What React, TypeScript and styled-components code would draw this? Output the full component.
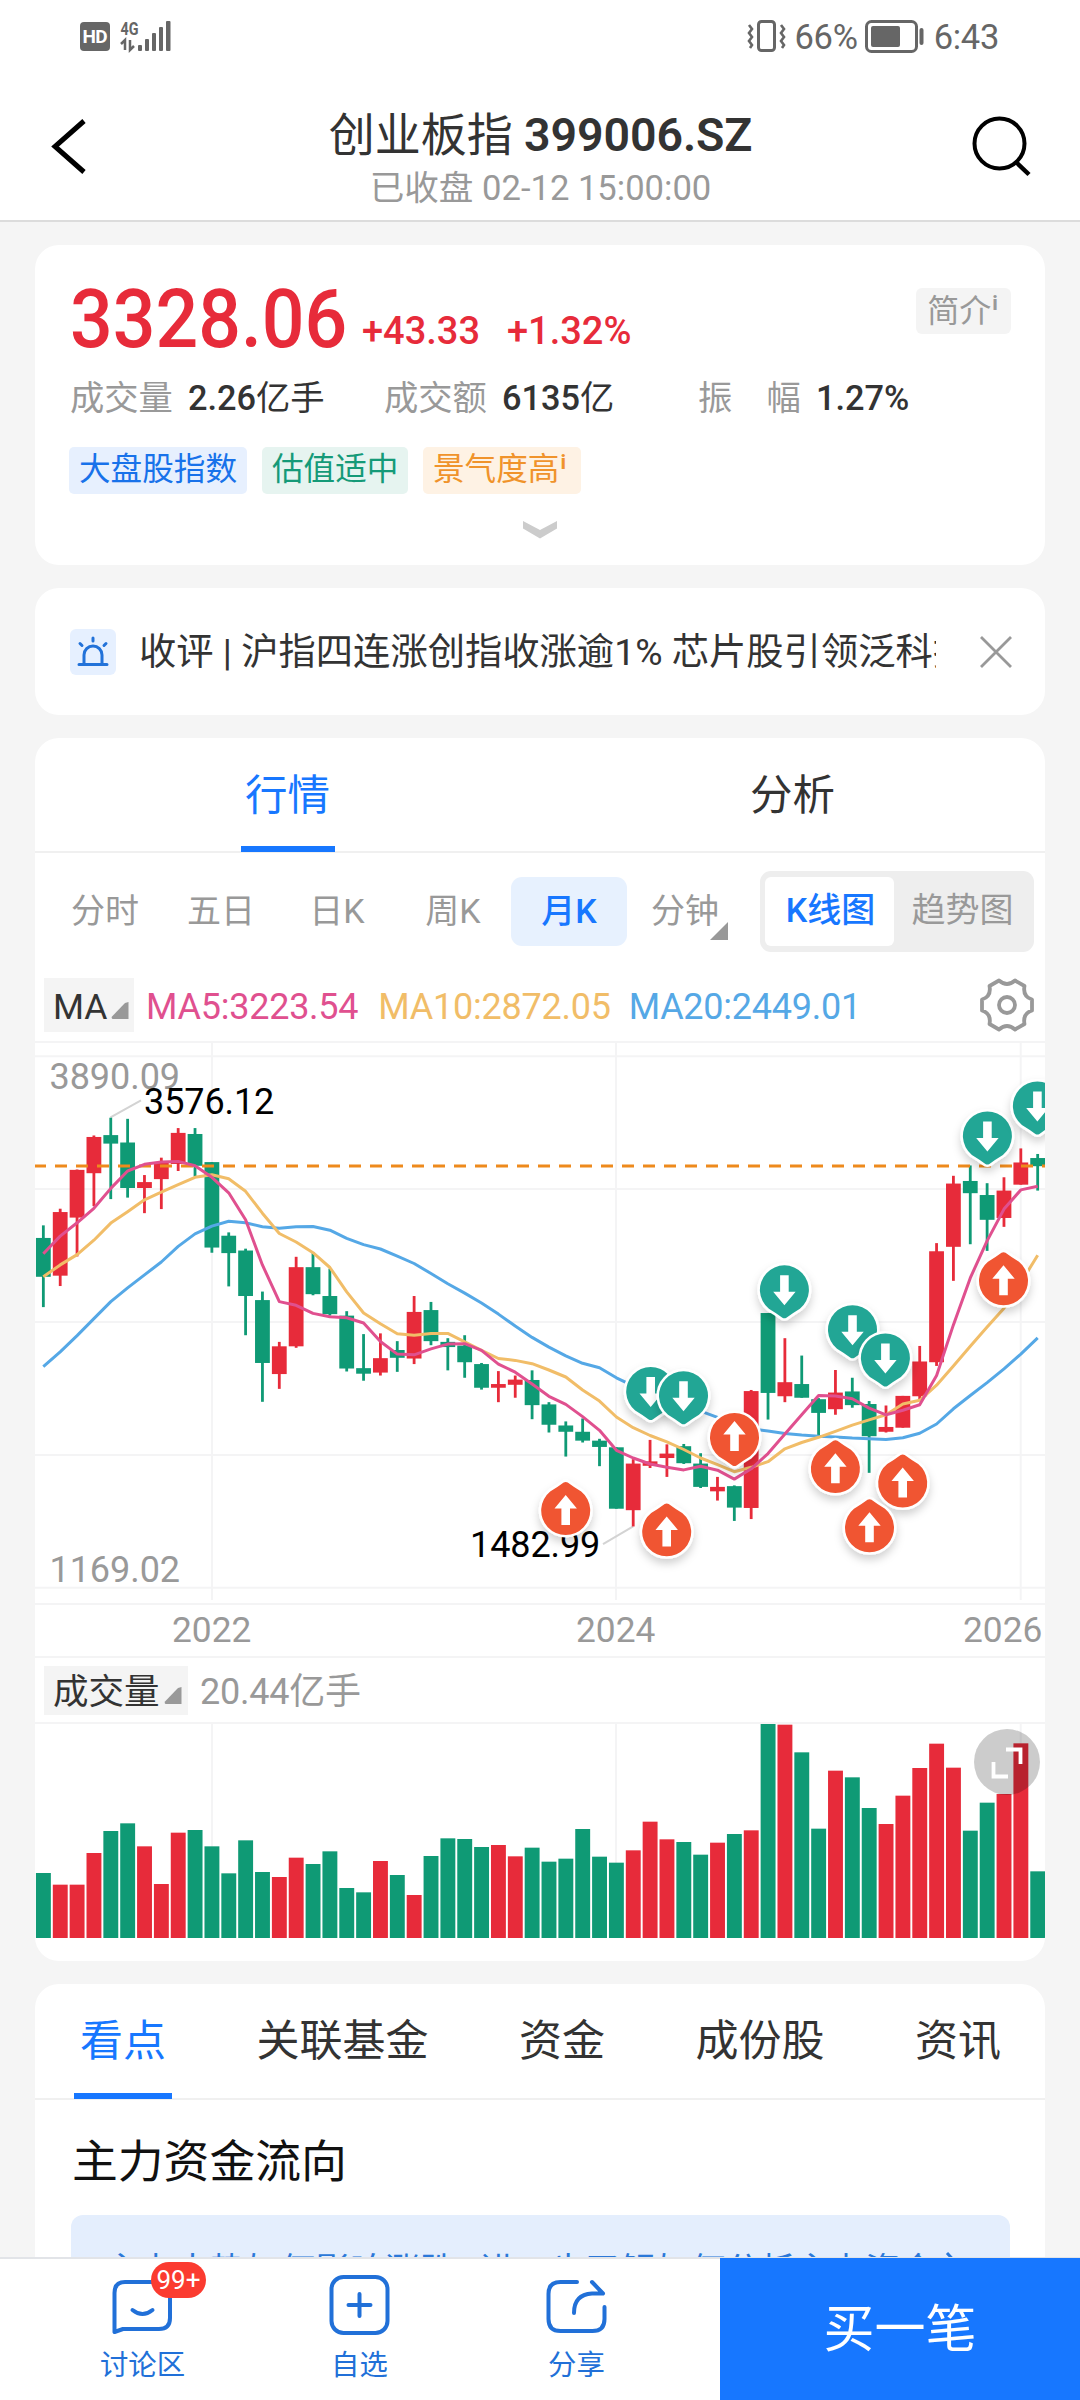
import React from "react";
import styled, { createGlobalStyle } from "styled-components";

const BLUE = "#1777ff";
const RED = "#e72b3a";
const GREEN = "#0f9a75";
const GREY = "#999999";
const LINE = "#f4f4f5";

const GlobalStyle = createGlobalStyle`
  html, body { margin: 0; padding: 0; background: #f5f5f5; }
  * { box-sizing: border-box; }
  body { font-family: Roboto, "Noto Sans CJK SC", sans-serif; color: #333; }
`;

const Screen = styled.div`
  width: 1080px;
  height: 2400px;
  display: flex;
  flex-direction: column;
  overflow: hidden;
  background: #f5f5f5;
`;

const Top = styled.header`
  flex: none;
  height: 222px;
  background: #fff;
  border-bottom: 2px solid #dcdcdc;
`;

const StatusBar = styled.div`
  height: 72px;
  padding: 0 81px 0 80px;
  display: flex;
  align-items: center;
  justify-content: space-between;
  color: #666;
`;

const StatusGroup = styled.div`
  display: flex;
  align-items: center;
`;

const StatusText = styled.span<{ $ml: number }>`
  margin-left: ${(p) => p.$ml}px;
  padding-top: 2px;
  font-size: 34.5px;
  line-height: 40px;
  letter-spacing: -0.3px;
`;

const NavBar = styled.div`
  height: 148px;
  padding: 0 48px 0 50px;
  display: flex;
  justify-content: space-between;
`;

const NavIcon = styled.svg`
  margin-top: 44px;
  flex: none;
`;

const TitleBlock = styled.div`
  display: flex;
  flex-direction: column;
  align-items: center;
  padding: 33px 0 0 21px;
`;

const Title = styled.h1`
  margin: 0;
  font-size: 46px;
  line-height: 60px;
  font-weight: 400;
  color: #333;
  white-space: nowrap;
  b { font-weight: 600; font-size: 46.5px; letter-spacing: -0.1px; }
`;

const Subtitle = styled.div`
  margin-top: 2px;
  font-size: 34.6px;
  line-height: 42px;
  color: ${GREY};
  white-space: nowrap;
`;

const Body = styled.main`
  flex: 1;
  min-height: 0;
  overflow: hidden;
  padding: 23px 35px 0;
  display: flex;
  flex-direction: column;
  gap: 23px;
`;

const Card = styled.section<{ $h: number }>`
  flex: none;
  height: ${(p) => p.$h}px;
  background: #fff;
  border-radius: 24px;
  overflow: hidden;
`;

const QuoteCard = styled(Card)`
  padding: 33px 35px 0;
`;

const PriceRow = styled.div`
  height: 84px;
  display: flex;
  align-items: flex-start;
  justify-content: space-between;
`;

const Prices = styled.div`
  display: flex;
  align-items: baseline;
  color: ${RED};
  line-height: 82px;
  font-weight: 500;
`;

const BigPrice = styled.span`
  width: 292px;
  font-size: 82px;
  transform: scaleX(0.917);
  transform-origin: 0 0;
`;

const Delta = styled.span<{ $w: number }>`
  width: ${(p) => p.$w}px;
  margin-bottom: -8px;
  align-self: flex-end;
  line-height: 74px;
  font-size: 38px;
`;

const IntroButton = styled.button`
  margin: 10px -1px 0 0;
  width: 95px;
  height: 46px;
  border: 0;
  border-radius: 6px;
  background: #f4f4f4;
  color: ${GREY};
  font: 400 32px/46px Roboto, "Noto Sans CJK SC", sans-serif;
  padding: 0 2px 0 0;
  display: flex;
  justify-content: center;
`;

const Sup = styled.span`
  font-size: 21px;
  line-height: 31px;
  font-weight: 700;
  margin-left: 1px;
`;

const StatRow = styled.div`
  margin-top: 12px;
  height: 48px;
  display: flex;
  align-items: center;
`;

const Stat = styled.div<{ $w: number }>`
  width: ${(p) => p.$w}px;
  display: flex;
  align-items: baseline;
  gap: 15px;
  font-size: 34.3px;
  line-height: 48px;
  white-space: pre;
`;

const StatLabel = styled.span`
  color: ${GREY};
`;

const StatValue = styled.span`
  color: #333;
  b { font-weight: 500; }
`;

const Tags = styled.div`
  margin: 25px 0 0 -1px;
  display: flex;
  gap: 15px;
`;

const Tag = styled.span<{ $c: string; $bg: string; $w: number }>`
  width: ${(p) => p.$w}px;
  height: 47px;
  padding-left: 10px;
  border-radius: 5px;
  display: flex;
  font-size: 31.6px;
  line-height: 45px;
  color: ${(p) => p.$c};
  background: ${(p) => p.$bg};
`;

const MoreIcon = styled.svg`
  display: block;
  margin: 26px auto 0;
`;

const NewsCard = styled(Card)`
  padding: 0 33px 0 35px;
  display: flex;
  align-items: center;
`;

const NewsIcon = styled.span`
  width: 46px;
  height: 46px;
  flex: none;
  border-radius: 6px;
  background: #e6f0ff;
`;

const NewsText = styled.div`
  margin-left: 23px;
  width: 797px;
  overflow: hidden;
  white-space: nowrap;
  font-size: 37.3px;
  line-height: 54px;
  color: #333;
`;

const CloseIcon = styled.svg`
  margin-left: auto;
  flex: none;
`;

const MainTabs = styled.div`
  height: 115px;
  display: flex;
  border-bottom: 2px solid #f0f0f0;
`;

const MainTab = styled.div<{ $on?: boolean }>`
  flex: 1;
  display: flex;
  flex-direction: column;
  align-items: center;
  font-size: 42.5px;
  line-height: 115px;
  color: ${(p) => (p.$on ? BLUE : "#333")};
  &::after {
    content: "";
    flex: none;
    margin-top: -7px;
    width: 94px;
    height: 6px;
    background: ${(p) => (p.$on ? BLUE : "transparent")};
  }
`;

const Periods = styled.div`
  height: 116px;
  padding: 0 11px 0 12px;
  display: flex;
  align-items: center;
`;

const Period = styled.div<{ $on?: boolean }>`
  position: relative;
  width: 116px;
  height: 69px;
  border-radius: 11px;
  text-align: center;
  font-size: 34px;
  line-height: 68px;
  color: ${(p) => (p.$on ? BLUE : GREY)};
  font-weight: ${(p) => (p.$on ? 500 : 400)};
  background: ${(p) => (p.$on ? "#e7f1fe" : "transparent")};
`;

const Corner = styled.svg`
  position: absolute;
  right: 15px;
  bottom: 6px;
`;

const Segment = styled.div`
  margin-left: auto;
  width: 274px;
  height: 81px;
  border-radius: 11px;
  background: #eeeeee;
  padding: 6px 5px;
  display: flex;
`;

const SegmentItem = styled.div<{ $on?: boolean; $w: number }>`
  width: ${(p) => p.$w}px;
  height: 69px;
  padding-left: 2px;
  border-radius: 6px;
  text-align: center;
  font-size: 34px;
  line-height: 67px;
  color: ${(p) => (p.$on ? BLUE : GREY)};
  background: ${(p) => (p.$on ? "#fff" : "transparent")};
  font-weight: ${(p) => (p.$on ? 500 : 400)};
`;

const IndicatorRow = styled.div<{ $h: number }>`
  height: ${(p) => p.$h}px;
  padding: 0 11px 0 9px;
  display: flex;
  align-items: center;
  border-bottom: 2px solid ${LINE};
`;

const Selector = styled.div<{ $w: number; $h: number; $pad: number }>`
  width: ${(p) => p.$w}px;
  height: ${(p) => p.$h}px;
  padding: 3px 0 0 ${(p) => p.$pad}px;
  background: #f4f4f4;
  display: flex;
  align-items: center;
  gap: 4px;
  font-size: 35.5px;
  color: #333;
  line-height: 48px;
  svg { margin-top: 8px; }
`;

const Indicator = styled.span<{ $c: string; $ml: number }>`
  margin-left: ${(p) => p.$ml}px;
  padding-top: 3px;
  font-size: 36px;
  line-height: 48px;
  letter-spacing: -0.25px;
  color: ${(p) => p.$c};
`;

const GearIcon = styled.svg`
  margin-left: auto;
`;

const Chart = styled.svg`
  display: block;
  text { font-family: Roboto, "Noto Sans CJK SC", sans-serif; font-size: 36px; }
`;

const Years = styled.div`
  height: 55px;
  border-top: 2px solid ${LINE};
  border-bottom: 2px solid ${LINE};
  display: flex;
  font-size: 35.3px;
  line-height: 51px;
  color: ${GREY};
`;

const Year = styled.span<{ $ml: number }>`
  width: 80px;
  margin-left: ${(p) => p.$ml}px;
`;

const VolumeArea = styled.div`
  position: relative;
`;

const ExpandButton = styled.svg`
  position: absolute;
  right: 5px;
  top: 5px;
`;

const InfoTabs = styled.div`
  height: 116px;
  padding: 0 44px 0 39px;
  display: flex;
  justify-content: space-between;
  border-bottom: 2px solid #f0f0f0;
`;

const InfoTab = styled.div<{ $on?: boolean }>`
  padding: 0 ${(p) => (p.$on ? "6px" : "0")};
  margin-right: ${(p) => (p.$on ? "-6px" : "0")};
  font-size: 43px;
  line-height: 115px;
  color: ${(p) => (p.$on ? BLUE : "#333")};
  height: 115px;
  border-bottom: 6px solid ${(p) => (p.$on ? BLUE : "transparent")};
`;

const SectionTitle = styled.h2`
  margin: 30px 0 0 37px;
  font-size: 45.8px;
  line-height: 66px;
  font-weight: 400;
  color: #111;
`;

const Tip = styled.div`
  margin: 19px 35px 0 36px;
  height: 110px;
  border-radius: 12px;
  background: #e4eefd;
  padding: 33px 34px 0;
  display: flex;
  font-size: 35px;
  line-height: 48px;
  color: #2b78d8;
  white-space: nowrap;
`;

const BottomBar = styled.footer`
  flex: none;
  height: 143px;
  background: #fff;
  display: flex;
  border-top: 2px solid #e2e4e8;
`;

const ActionBar = styled.div`
  width: 720px;
  display: flex;
  padding-left: 34px;
`;

const Action = styled.div`
  position: relative;
  width: 217px;
  padding: 15px 0 0 78px;
  color: #2170d8;
`;

const ActionLabel = styled.div`
  margin: 0 0 0 -78px;
  text-align: center;
  font-size: 28.4px;
  line-height: 40px;
  padding-top: 6px;
`;

const Badge = styled.span`
  position: absolute;
  left: 117px;
  top: 3px;
  width: 55px;
  height: 36px;
  border-radius: 18px;
  background: #fb3b30;
  color: #fff;
  font-size: 26px;
  line-height: 37px;
  text-align: center;
`;

const BuyButton = styled.div`
  width: 360px;
  margin-top: -1px;
  background: ${BLUE};
  color: #fff;
  font-size: 51px;
  line-height: 143px;
  text-align: center;
`;

/* high, body top, body bottom, low, rising; measured in plot units */
const CANDLES: [number, number, number, number, number][] = [
  [528, 562, 667, 749, 0], [483, 492, 664, 692, 1], [377, 378, 507, 612, 1], [285, 289, 387, 476, 1],
  [237, 284, 307, 457, 0], [240, 304, 427, 453, 0], [392, 411, 427, 495, 1], [345, 358, 403, 484, 1],
  [265, 278, 362, 381, 1], [265, 281, 367, 396, 0], [357, 357, 588, 602, 0], [547, 556, 603, 693, 0],
  [591, 596, 719, 825, 0], [707, 730, 900, 1005, 0], [843, 855, 930, 970, 1], [613, 641, 855, 859, 1],
  [600, 641, 714, 717, 0], [645, 719, 768, 772, 0], [760, 772, 915, 923, 0], [822, 914, 929, 948, 0],
  [820, 887, 926, 934, 1], [841, 865, 886, 924, 0], [719, 762, 888, 903, 1], [735, 757, 841, 852, 0],
  [833, 843, 857, 920, 0], [825, 853, 898, 940, 0], [900, 903, 967, 972, 0], [922, 957, 967, 1006, 1],
  [934, 945, 959, 994, 1], [920, 946, 1014, 1052, 0], [1006, 1012, 1067, 1088, 0], [1058, 1069, 1086, 1153, 0],
  [1050, 1086, 1110, 1115, 0], [1105, 1110, 1127, 1179, 0], [1128, 1128, 1294, 1294, 0], [1160, 1172, 1298, 1342, 1],
  [1108, 1166, 1178, 1184, 1], [1120, 1145, 1157, 1208, 1], [1119, 1125, 1171, 1173, 0], [1144, 1172, 1235, 1238, 0],
  [1208, 1235, 1247, 1272, 1], [1231, 1233, 1291, 1327, 0], [973, 976, 1292, 1322, 1], [765, 765, 981, 1053, 0],
  [833, 952, 990, 1006, 1], [880, 957, 994, 994, 0], [995, 998, 1035, 1100, 0], [919, 980, 1025, 1040, 1],
  [940, 977, 1014, 1021, 0], [1003, 1011, 1098, 1197, 0], [1015, 1073, 1086, 1088, 1], [989, 989, 1075, 1075, 1],
  [854, 896, 990, 1000, 1], [576, 598, 898, 908, 1], [394, 415, 586, 678, 1], [366, 408, 441, 579, 0],
  [414, 446, 513, 597, 0], [398, 434, 508, 532, 1], [320, 358, 418, 418, 1], [335, 346, 368, 434, 0],
];

const MA5 = [605, 557, 521, 482, 428, 381, 363, 357, 355, 367, 398, 440, 513, 635, 734, 744, 766, 775, 778, 792, 842, 876, 878, 862, 849, 848, 866, 903, 925, 957, 990, 1012, 1045, 1082, 1136, 1157, 1173, 1182, 1189, 1179, 1190, 1214, 1186, 1145, 1092, 1040, 988, 989, 997, 1022, 1040, 1028, 1013, 934, 797, 670, 570, 484, 432, 422];
const MA10 = [667, 635, 607, 568, 522, 491, 459, 438, 418, 398, 391, 402, 436, 495, 550, 573, 602, 642, 708, 765, 794, 821, 825, 820, 820, 843, 866, 888, 893, 902, 919, 938, 973, 1003, 1046, 1075, 1096, 1113, 1134, 1157, 1175, 1194, 1182, 1167, 1132, 1115, 1101, 1085, 1068, 1054, 1040, 1011, 1001, 960, 908, 855, 803, 752, 683, 609];
const MA20 = [910, 870, 826, 780, 734, 697, 662, 627, 585, 551, 530, 517, 521, 532, 536, 532, 531, 541, 563, 580, 592, 611, 631, 658, 686, 711, 738, 768, 800, 831, 857, 881, 901, 913, 940, 962, 985, 1005, 1020, 1030, 1047, 1068, 1078, 1084, 1091, 1095, 1098, 1100, 1103, 1105, 1107, 1102, 1090, 1065, 1024, 988, 953, 916, 876, 832];

const VOLUME = [195, 160, 160, 255, 321, 344, 275, 162, 316, 324, 275, 194, 293, 198, 183, 241, 222, 260, 150, 137, 231, 189, 129, 246, 299, 297, 273, 279, 245, 271, 229, 238, 327, 244, 226, 263, 349, 296, 288, 250, 286, 312, 323, 645, 640, 557, 328, 502, 482, 390, 342, 427, 510, 583, 511, 322, 406, 432, 584, 200];

/* centre x, tip y in plot units, arrow direction, tip direction, colour */
const MARKERS: [number, number, "up" | "down", "up" | "down", string][] = [
  [615.7, 1053, "down", "down", "#24a695"],
  [648.5, 1064, "down", "down", "#24a695"],
  [749.4, 778, "down", "down", "#24a695"],
  [817.5, 886, "down", "down", "#24a695"],
  [850.4, 962, "down", "down", "#24a695"],
  [952.4, 362, "down", "down", "#24a695"],
  [1002.4, 281, "down", "down", "#24a695"],
  [530.7, 1223, "up", "up", "#f05430"],
  [631.7, 1281, "up", "up", "#f05430"],
  [800.4, 1110, "up", "up", "#f05430"],
  [867.7, 1149, "up", "up", "#f05430"],
  [834.5, 1270, "up", "up", "#f05430"],
  [968.5, 602, "up", "up", "#f05430"],
  [699.5, 1177, "up", "down", "#f05430"],
];

const cx = (i: number) => 8.35 + i * 16.853;
const py = (v: number) => (v - 35) / 2.7034;
const toPoints = (s: number[]) => s.map((v, i) => `${cx(i).toFixed(1)},${py(v).toFixed(1)}`).join(" ");

const GRID_X = [177, 581, 985.7];

function Marker({ x, tip, arrow, point, color }: { x: number; tip: number; arrow: string; point: string; color: string }) {
  const cy = point === "down" ? py(tip) - 28.5 : py(tip) + 28.5;
  return (
    <g transform={`translate(${x} ${cy})`}>
      <g filter="url(#shadow)">
        <path
          transform={point === "down" ? undefined : "rotate(180)"}
          d="M-2 28.500 Q-8 24 -15.500 19.500 A24.500 24.500 0 1 1 15.500 19.500 Q8 24 2 28.500 Q0 29.500 -2 28.500Z"
          fill={color}
          stroke="#fff"
          strokeWidth="5"
          paintOrder="stroke"
          strokeLinejoin="round"
        />
      </g>
      <path
        transform={arrow === "down" ? "translate(0 1)" : "rotate(180) translate(0 1)"}
        d="M-4.300 -15 H4.300 V1.500 H11.200 L0 15 L-11.200 1.500 H-4.300Z"
        fill="#fff"
      />
    </g>
  );
}

function CandleChart() {
  const lastY = py(367.5);
  return (
    <Chart width="1010" height="560" viewBox="0 0 1010 560">
      <defs>
        <filter id="shadow" x="-40%" y="-40%" width="180%" height="180%">
          <feDropShadow dx="0" dy="5" stdDeviation="4" floodColor="#000" floodOpacity="0.18" />
        </filter>
      </defs>
      <g stroke={LINE} strokeWidth="2">
        {[71, 430, 789, 1149, 1508].map((v) => (
          <line key={v} x1="0" x2="1010" y1={py(v)} y2={py(v)} />
        ))}
        {GRID_X.map((x) => (
          <line key={x} x1={x} x2={x} y1="0" y2="557" />
        ))}
      </g>
      <text x="14.500" y="46" fill={GREY} letterSpacing="-0.050">3890.09</text>
      <text x="14.500" y="539" fill={GREY} letterSpacing="-0.050">1169.02</text>
      <path d={`M75.500 ${py(236)} L106 ${py(190)}`} stroke="#d3d3d3" strokeWidth="2" />
      <path d={`M${cx(35)} ${py(1342)} L568 ${py(1390)}`} stroke="#d3d3d3" strokeWidth="2" />
      {CANDLES.map(([h, t, b, l, up], i) => (
        <g key={i} fill={up ? RED : GREEN}>
          <rect x={cx(i) - 1.4} y={py(h)} width="2.800" height={py(l) - py(h)} />
          <rect x={cx(i) - 7.4} y={py(t)} width="14.800" height={py(b) - py(t)} />
        </g>
      ))}
      <line x1="0" x2="1010" y1={lastY} y2={lastY} stroke="#ee8a1c" strokeWidth="3" strokeDasharray="12 9" strokeDashoffset="1" />
      <g fill="none" strokeWidth="3" strokeLinejoin="round">
        <polyline points={toPoints(MA20)} stroke="#55a8e6" />
        <polyline points={toPoints(MA10)} stroke="#f1bd68" />
        <polyline points={toPoints(MA5)} stroke="#e0508f" />
      </g>
      <text x="109" y="71" fill="#000" letterSpacing="-0.100">3576.12</text>
      <text x="435" y="514" fill="#000" letterSpacing="-0.100">1482.99</text>
      {MARKERS.map(([x, tip, arrow, point, color], i) => (
        <Marker key={i} x={x} tip={tip} arrow={arrow} point={point} color={color} />
      ))}
    </Chart>
  );
}

function VolumeChart() {
  return (
    <VolumeArea>
      <Chart width="1010" height="238" viewBox="0 0 1010 238">
        {GRID_X.map((x) => (
          <line key={x} x1={x} x2={x} y1="0" y2="214" stroke={LINE} strokeWidth="2" />
        ))}
        {VOLUME.map((v, i) => (
          <rect key={i} x={cx(i) - 7.4} y={214 - v / 3} width="14.900" height={v / 3} fill={CANDLES[i][4] ? RED : GREEN} />
        ))}
      </Chart>
      <ExpandButton width="66" height="66" viewBox="0 0 66 66" fill="none">
        <circle cx="33" cy="33" r="33" fill="#000" fillOpacity="0.200" />
        <path d="M32 20.500 H46.500 V35 M19.500 33 V47.500 H34" stroke="#fff" strokeWidth="3.800" />
      </ExpandButton>
    </VolumeArea>
  );
}

const Triangle = () => (
  <svg width="18" height="17" viewBox="0 0 18 17">
    <path d="M17.500 0 V17 H1.500 Q0 16 1 14.500 L14 1Z" fill="#999" />
  </svg>
);

export default function App() {
  return (
    <Screen>
      <GlobalStyle />
      <Top>
        <StatusBar>
          <StatusGroup>
            <svg width="92" height="34" viewBox="0 -1 92 34" fontFamily="Roboto, sans-serif" fontWeight="700">
              <rect x="0" y="2" width="30" height="29" rx="4" fill="#666" />
              <text x="2.500" y="23" fontSize="19" fill="#fff" textLength="25">HD</text>
              <text x="40.500" y="14.500" fontSize="18" fill="#666" textLength="18" lengthAdjust="spacingAndGlyphs">4G</text>
              <path d="M41 24 L45 20 V30 M50 20 V30 L54 26" fill="none" stroke="#666" strokeWidth="2.500" />
              <g fill="#666">
                <rect x="58" y="25" width="4" height="6" rx="1" />
                <rect x="65" y="19" width="4" height="12" rx="1" />
                <rect x="72" y="13" width="4" height="18" rx="1" />
                <rect x="79" y="7" width="4" height="24" rx="1" />
                <rect x="86" y="1" width="4.500" height="30" rx="1" />
              </g>
            </svg>
          </StatusGroup>
          <StatusGroup>
            <svg width="40" height="32" viewBox="0 0 40 32" fill="none" stroke="#666" strokeWidth="3">
              <rect x="11.500" y="1.500" width="16" height="29" rx="3" />
              <path d="M2 5 L5 9 L2 13 L5 17 L2 21 L5 25 L3 28" strokeWidth="2.600" />
              <path d="M34 5 L37 9 L34 13 L37 17 L34 21 L37 25 L35 28" strokeWidth="2.600" />
            </svg>
            <StatusText $ml={8}>66%</StatusText>
            <svg width="72" height="33" viewBox="-7 0 72 33">
              <rect x="1.500" y="1.500" width="50" height="30" rx="5" fill="none" stroke="#666" strokeWidth="3" />
              <rect x="6" y="6" width="29" height="21" rx="2" fill="#666" />
              <rect x="54.500" y="8" width="4" height="17" rx="2" fill="#666" />
            </svg>
            <StatusText $ml={4}>6:43</StatusText>
          </StatusGroup>
        </StatusBar>
        <NavBar>
          <NavIcon width="40" height="60" viewBox="0 0 40 60" fill="none" stroke="#000" strokeWidth="5">
            <path d="M34 5 L5 30.500 L34 56" />
          </NavIcon>
          <TitleBlock>
            <Title>创业板指 <b>399006.SZ</b></Title>
            <Subtitle>已收盘 02-12 15:00:00</Subtitle>
          </TitleBlock>
          <NavIcon width="62" height="62" viewBox="0 0 62 62" fill="none" stroke="#000" strokeWidth="4">
            <circle cx="29.500" cy="27.500" r="25" />
            <path d="M46.500 46.500 L59 58.500" strokeWidth="4.500" />
          </NavIcon>
        </NavBar>
      </Top>

      <Body>
        <QuoteCard $h={320}>
          <PriceRow>
            <Prices>
              <BigPrice>3328.06</BigPrice>
              <Delta $w={145}>+43.33</Delta>
              <Delta $w={130}>+1.32%</Delta>
            </Prices>
            <IntroButton>简介<Sup>i</Sup></IntroButton>
          </PriceRow>
          <StatRow>
            <Stat $w={314}><StatLabel>成交量</StatLabel><StatValue><b>2.26</b>亿手</StatValue></Stat>
            <Stat $w={314}><StatLabel>成交额</StatLabel><StatValue><b>6135</b>亿</StatValue></Stat>
            <Stat $w={240}><StatLabel>振　幅</StatLabel><StatValue><b>1.27%</b></StatValue></Stat>
          </StatRow>
          <Tags>
            <Tag $c="#1872ea" $bg="#e7f0fe" $w={178}>大盘股指数</Tag>
            <Tag $c="#159a78" $bg="#e6f4f0" $w={146}>估值适中</Tag>
            <Tag $c="#f0932b" $bg="#fef2e4" $w={158}>景气度高<Sup>i</Sup></Tag>
          </Tags>
          <MoreIcon width="34" height="20" viewBox="0 0 34 20">
            <path d="M0 1 L17 10 L34 1 V8.500 L17 18.500 L0 8.500Z" fill="#ccc" />
          </MoreIcon>
        </QuoteCard>

        <NewsCard $h={127}>
          <NewsIcon>
            <svg width="46" height="46" viewBox="0 0 46 46" fill="none" stroke="#2272d9" strokeWidth="3" strokeLinecap="round">
              <path d="M9 35.500 H37 M14 35 V26 A9 9 0 0 1 32 26 V35 M23 9 V12 M10 14.500 L12 16.500 M36 14.500 L34 16.500" />
            </svg>
          </NewsIcon>
          <NewsText>收评 | 沪指四连涨创指收涨逾1% 芯片股引领泛科技</NewsText>
          <CloseIcon width="32" height="32" viewBox="0 0 32 32" stroke="#999" strokeWidth="2.800">
            <path d="M1 1 L31 31 M31 1 L1 31" />
          </CloseIcon>
        </NewsCard>

        <Card $h={1223}>
          <MainTabs>
            <MainTab $on>行情</MainTab>
            <MainTab>分析</MainTab>
          </MainTabs>
          <Periods>
            <Period>分时</Period>
            <Period>五日</Period>
            <Period>日K</Period>
            <Period>周K</Period>
            <Period $on>月K</Period>
            <Period>
              分钟
              <Corner width="18" height="18"><path d="M18 0 V18 H0Z" fill="#999" /></Corner>
            </Period>
            <Segment>
              <SegmentItem $on $w={129}>K线图</SegmentItem>
              <SegmentItem $w={135}>趋势图</SegmentItem>
            </Segment>
          </Periods>
          <IndicatorRow $h={74}>
            <Selector $w={90} $h={54} $pad={9}>MA<Triangle /></Selector>
            <Indicator $c="#e0508f" $ml={12}>MA5:3223.54</Indicator>
            <Indicator $c="#f1bd68" $ml={20}>MA10:2872.05</Indicator>
            <Indicator $c="#55a8e6" $ml={18}>MA20:2449.01</Indicator>
            <GearIcon width="54" height="54" viewBox="0 0 54 54" fill="none" stroke="#999" strokeWidth="3.800" strokeLinejoin="round">
              <path d="M19 2.500 Q27 9.500 35 2.500 L44.500 8 Q42.500 18.500 52 21.500 V32.500 Q42.500 35.500 44.500 46 L35 51.500 Q27 44.500 19 51.500 L9.500 46 Q11.500 35.500 2 32.500 V21.500 Q11.500 18.500 9.500 8Z" />
              <circle cx="27" cy="27" r="8" />
            </GearIcon>
          </IndicatorRow>
          <CandleChart />
          <Years>
            <Year $ml={137}>2022</Year>
            <Year $ml={324}>2024</Year>
            <Year $ml={307}>2026</Year>
          </Years>
          <IndicatorRow $h={66}>
            <Selector $w={144} $h={49} $pad={9}>成交量<Triangle /></Selector>
            <Indicator $c={GREY} $ml={12}>20.44亿手</Indicator>
          </IndicatorRow>
          <VolumeChart />
        </Card>

        <Card $h={420}>
          <InfoTabs>
            <InfoTab $on>看点</InfoTab>
            <InfoTab>关联基金</InfoTab>
            <InfoTab>资金</InfoTab>
            <InfoTab>成份股</InfoTab>
            <InfoTab>资讯</InfoTab>
          </InfoTabs>
          <SectionTitle>主力资金流向</SectionTitle>
          <Tip>主力大势如何影响涨跌? 进一步了解如何分析主力资金
            <svg width="30" height="48" viewBox="0 0 30 48" fill="none" stroke="#2b78d8" strokeWidth="3"><path d="M12 5 L26 20 L12 35" /></svg>
          </Tip>
        </Card>
      </Body>

      <BottomBar>
        <ActionBar>
          <Action>
            <svg width="62" height="62" viewBox="0 0 62 62" fill="none" stroke="currentColor" strokeWidth="4" strokeLinecap="round" strokeLinejoin="round">
              <path d="M13 8 H47 Q58 8 58 19 V44 Q58 55 47 55 H11 L2.500 58 V19 Q2.500 8 13 8Z" />
              <path d="M20.500 36 Q30.500 44 40.500 36" />
            </svg>
            <Badge>99+</Badge>
            <ActionLabel>讨论区</ActionLabel>
          </Action>
          <Action>
            <svg width="62" height="62" viewBox="0 0 62 62" fill="none" stroke="currentColor" strokeWidth="4" strokeLinecap="round">
              <rect x="2.500" y="3" width="56" height="56" rx="12" />
              <path d="M30.500 20 V42 M19.500 31 H41.500" />
            </svg>
            <ActionLabel>自选</ActionLabel>
          </Action>
          <Action>
            <svg width="62" height="62" viewBox="0 0 62 62" fill="none" stroke="currentColor" strokeWidth="4" strokeLinecap="round" strokeLinejoin="round">
              <path d="M31 8 H14.500 Q2.500 8 2.500 20 V45 Q2.500 57 14.500 57 H46.500 Q58.500 57 58.500 45 V33" />
              <path d="M46 8 L57 19.500 H46 Q28 20.500 28 39" />
            </svg>
            <ActionLabel>分享</ActionLabel>
          </Action>
        </ActionBar>
        <BuyButton>买一笔</BuyButton>
      </BottomBar>
    </Screen>
  );
}
